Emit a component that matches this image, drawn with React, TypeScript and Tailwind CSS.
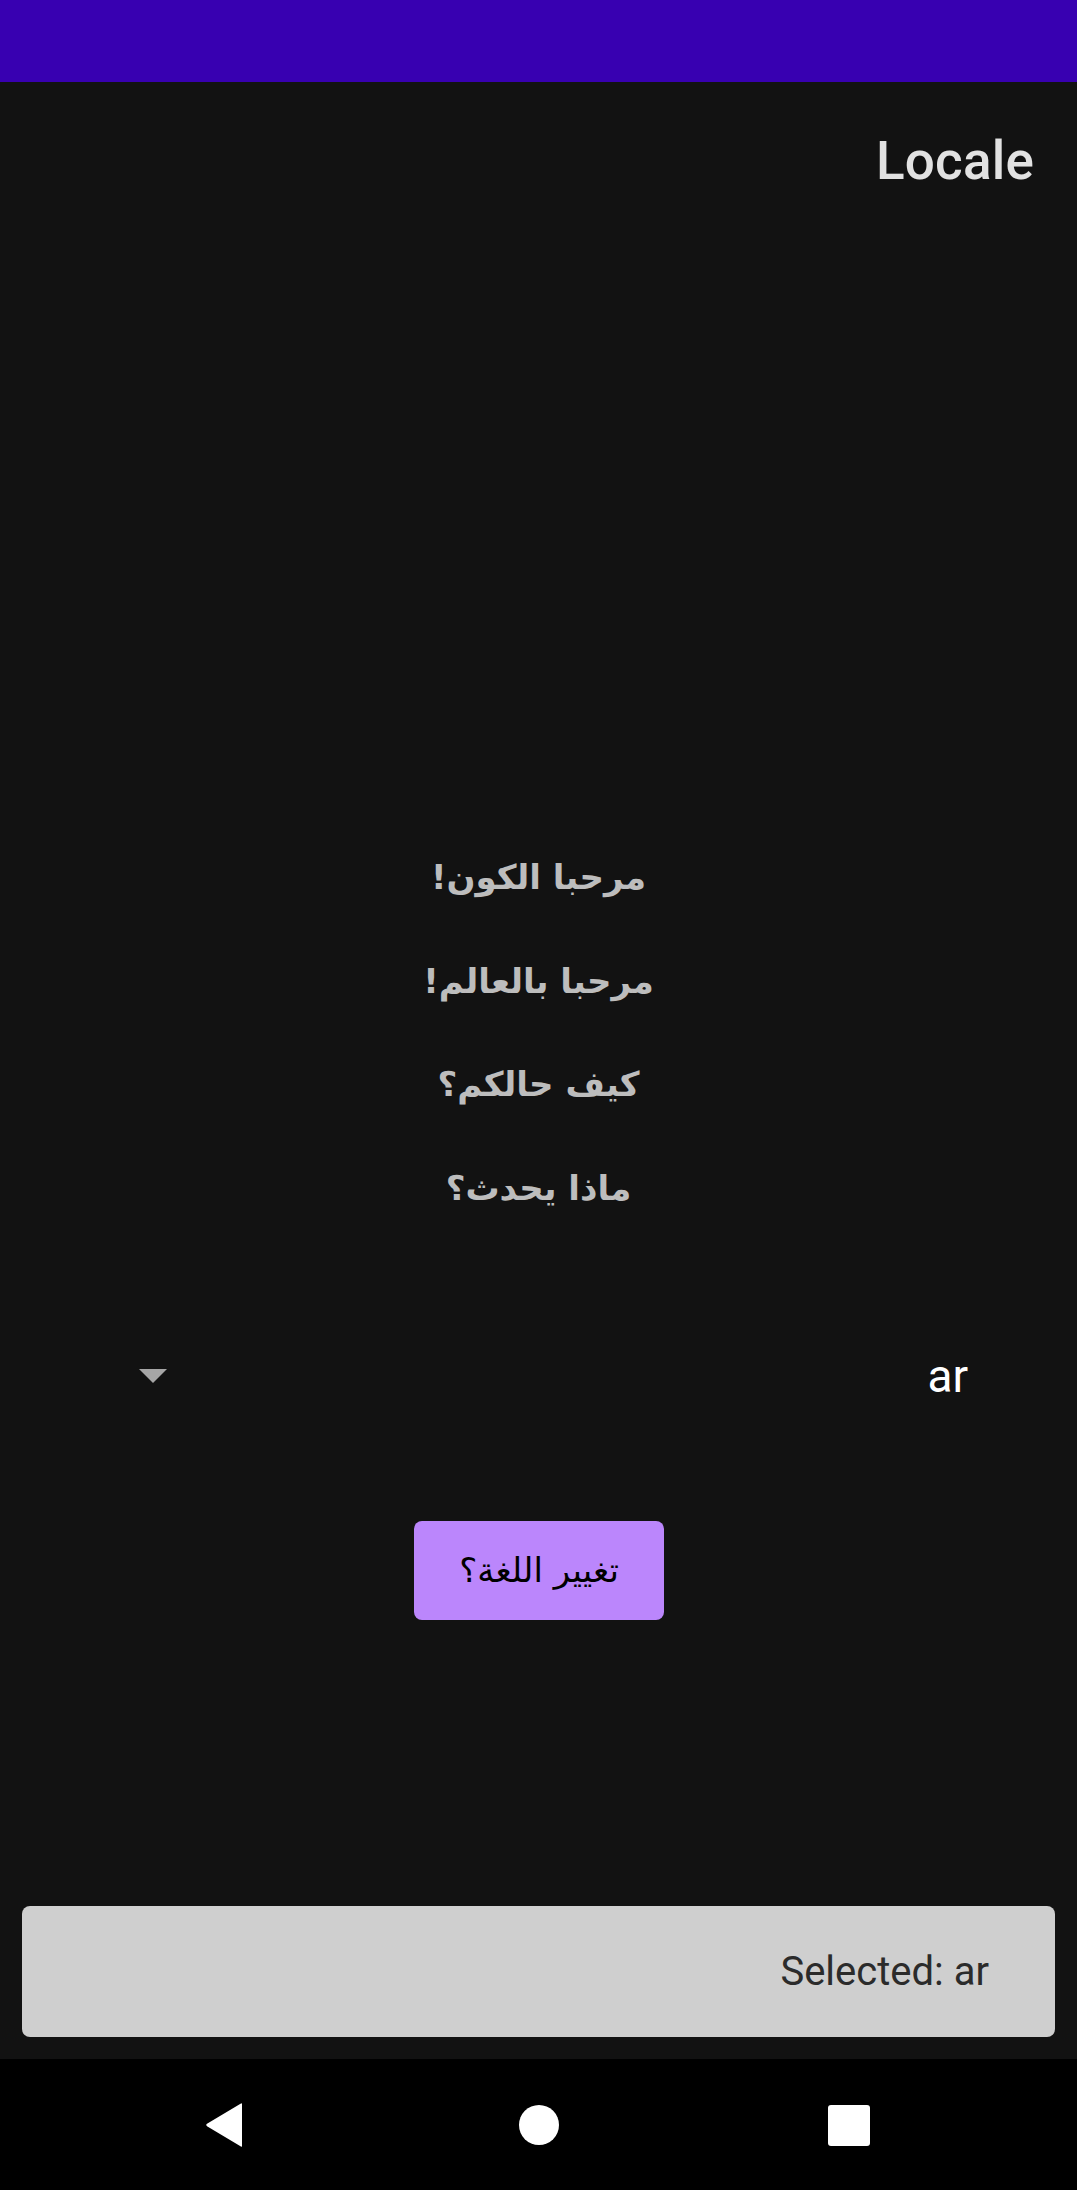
import React from "react";

const lines = ["مرحبا الكون!", "مرحبا بالعالم!", "كيف حالكم؟", "ماذا يحدث؟"];

export default function App() {
  return (
    <div
      className="w-[1077px] h-[2190px] bg-[#121212] flex flex-col overflow-hidden"
      style={{ fontFamily: "Roboto, 'Noto Sans', 'DejaVu Sans', sans-serif" }}
    >
      <div className="h-[82px] shrink-0 bg-[#3800b1]" />
      <div className="h-[147px] shrink-0 flex items-center justify-end pr-[43px]">
        <span className="text-[53px] leading-none font-medium text-[#e2e2e2] tracking-[0.2px] mt-[12px]">
          Locale
        </span>
      </div>

      <div className="flex flex-col items-center mt-[597px]" dir="rtl">
        {lines.map((l) => (
          <div
            key={l}
            className="h-[103.5px] flex items-center justify-center text-[34px] font-bold text-[#bdbdbd]"
            style={{ fontFamily: "'DejaVu Sans', sans-serif" }}
          >
            {l}
          </div>
        ))}
      </div>

      <div className="mt-[86px] h-[100px] flex items-center justify-between pl-[139px] pr-[109px]">
        <svg width="28" height="14" viewBox="0 0 28 14">
          <polygon points="0,0 28,0 14,14" fill="#a6a6a6" />
        </svg>
        <span className="text-[46px] leading-none text-white">ar</span>
      </div>

      <div className="mt-[95px] flex justify-center">
        <button
          className="w-[250px] h-[99px] ml-[1px] rounded-[8px] bg-[#bb86fc] text-black text-[34px] flex items-center justify-center"
          style={{ fontFamily: "'DejaVu Sans', sans-serif" }}
          dir="rtl"
        >
          تغيير اللغة؟
        </button>
      </div>

      <div className="flex-1" />

      <div className="mx-[22px] mb-[22px] h-[131px] rounded-[8px] bg-[#cfcfcf] flex items-center justify-end pr-[66px]">
        <span className="text-[40px] leading-none text-[#2b2b2b]">Selected: ar</span>
      </div>

      <div className="h-[131px] shrink-0 bg-black relative">
        <svg className="absolute left-[205px] top-[44px]" width="39" height="44" viewBox="0 0 39 44">
          <path d="M37 1 L37 43 Q37 44.5 35.5 43.3 L2 23.2 Q0.5 22 2 20.8 L35.5 0.7 Q37 -0.5 37 1 Z" fill="white" />
        </svg>
        <div className="absolute left-[519px] top-[46px] w-[40px] h-[40px] rounded-full bg-white" />
        <div className="absolute left-[828px] top-[46px] w-[42px] h-[41px] rounded-[3px] bg-white" />
      </div>
    </div>
  );
}
